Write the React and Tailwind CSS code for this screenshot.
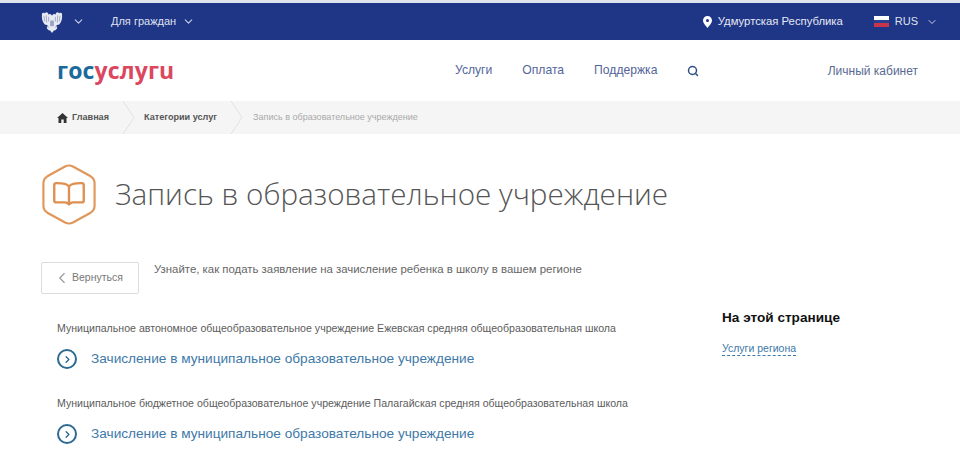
import React from 'react';
import { ChevronDown, ChevronLeft, ChevronRight, Search } from 'lucide-react';

const Emblem = () => (
    <svg width="22" height="22" viewBox="0 0 22 23">
        <path d="M11 5 C10 3 8.5 2.5 7.5 4 C7 1.5 5 0.5 3.5 2.5 C2.5 1.5 1 2 0.5 3 C0 8 1 12 3.5 14 L6.5 15 L5.5 18 L7.5 20 L9 20.5 L11 23 L13 20.5 L14.5 20 L16.5 18 L15.5 15 L18.5 14 C21 12 22 8 21.5 3 C21 2 19.5 1.5 18.5 2.5 C17 0.5 15 1.5 14.5 4 C13.5 2.5 12 3 11 5 Z" fill="#e8ebf3" />
        <path d="M2.5 5 L3.5 11 M5 4.5 L5.5 12 M7.5 6 V11 M14.5 6 V11 M17 4.5 L16.5 12 M19.5 5 L18.5 11 M5.5 16 L8 17 M16.5 16 L14 17" stroke="#8f99ba" strokeWidth="0.8" fill="none" />
        <rect x="9" y="10" width="4" height="6" rx="1" fill="#9aa3c1" />
    </svg>
);

const BookIcon = () => (
    <svg width="56" height="61" viewBox="0 0 56 62" fill="none">
        <path d="M24 2.5 Q28 0.5 32 2.5 L50 12.5 Q54 15 54 19.5 L54 42.5 Q54 47 50 49.5 L32 59.5 Q28 61.5 24 59.5 L6 49.5 Q2 47 2 42.5 L2 19.5 Q2 15 6 12.5 Z" stroke="#e2975a" strokeWidth="2.2" />
        <path d="M28 23 C26 20 23 19.5 15 19.5 Q13 19.5 13 21.5 V37 Q13 39 15 39 H24 C26 39 27 40 28 41 C29 40 30 39 32 39 H41 Q43 39 43 37 V21.5 Q43 19.5 41 19.5 C33 19.5 30 20 28 23 Z M28 23 V41" stroke="#df8f50" strokeWidth="2.4" strokeLinejoin="round" />
    </svg>
);

const Crumb = () => (
    <svg width="14" height="33" viewBox="0 0 14 33" fill="none" className="shrink-0">
        <path d="M1 0 L12 16.5 L1 33" stroke="#e2e2e2" strokeWidth="1" />
    </svg>
);

const ServiceItem = ({ org }) => (
    <div>
        <p className="text-[10.6px] leading-[14px] text-[#5c5c5c]">{org}</p>
        <a href="#" className="flex items-center gap-[14px] mt-[14px]">
            <span className="flex items-center justify-center w-[20px] h-[20px] rounded-full border-2 border-[#2c6a92]">
                <ChevronRight size={11} strokeWidth={3} className="text-[#2c6a92]" />
            </span>
            <span className="text-[13.65px] leading-[20px] font-medium text-[#4079a8]">Зачисление в муниципальное образовательное учреждение</span>
        </a>
    </div>
);

const App = () => {
    return (
        <div className="w-[960px] h-[467px] overflow-hidden bg-white font-['Liberation_Sans',sans-serif]">
            <div className="h-[3px] bg-[#dfe3ee]" />

            <div className="h-[37px] bg-[#1f3585] flex items-center pl-[41px] pr-[22px] text-white text-[11px]">
                <Emblem />
                <ChevronDown size={13} className="ml-[9px] text-[#c9d0e6]" />
                <span className="ml-[26px] text-[#dfe3ef]">Для граждан</span>
                <ChevronDown size={13} className="ml-[6px] text-[#c9d0e6]" />
                <svg width="9" height="12" viewBox="0 0 9 12" className="ml-auto">
                    <path fillRule="evenodd" d="M4.5 0 C7 0 9 2 9 4.5 C9 7 6 10 4.5 12 C3 10 0 7 0 4.5 C0 2 2 0 4.5 0 Z M4.5 3 A1.5 1.5 0 1 0 4.5 6 A1.5 1.5 0 1 0 4.5 3 Z" fill="#fff" />
                </svg>
                <span className="ml-[6px] text-[11.3px] text-[#e6e9f3]">Удмуртская Республика</span>
                <span className="ml-[31px] flex flex-col w-[15px] h-[11px]">
                    <span className="flex-1 bg-white" />
                    <span className="flex-1 bg-[#2c3f8f]" />
                    <span className="flex-1 bg-[#c8344c]" />
                </span>
                <span className="ml-[6px] text-[#dfe3ef]">RUS</span>
                <ChevronDown size={12} className="ml-[8px] text-[#c9d0e6]" />
            </div>

            <div className="h-[61px] flex items-center pl-[57px] pr-[42px]">
                <div className="w-[398px] text-[23px] font-bold tracking-[0.15px] font-['Open_Sans',sans-serif] leading-none">
                    <span className="text-[#1c6a9c]">гос</span>
                    <span className="text-[#dc4760]">услугu</span>
                </div>
                <nav className="flex items-center gap-[30px] text-[12.15px] text-[#53659a]">
                    <a href="#">Услуги</a>
                    <a href="#">Оплата</a>
                    <a href="#">Поддержка</a>
                </nav>
                <Search size={12} strokeWidth={3} className="ml-[30px] text-[#2f4d85]" />
                <a href="#" className="ml-auto text-[12px] text-[#5a6a92]">Личный кабинет</a>
            </div>

            <div className="h-[33px] bg-[#f5f5f5] flex items-center pl-[57px] text-[9.1px]">
                <svg width="11" height="10" viewBox="0 0 11 10">
                    <path d="M5.5 0 L11 5 L9.5 5 L9.5 10 L6.7 10 L6.7 6.5 L4.3 6.5 L4.3 10 L1.5 10 L1.5 5 L0 5 Z" fill="#333" />
                </svg>
                <span className="ml-[4px] font-bold text-[#555]">Главная</span>
                <span className="ml-[13px]"><Crumb /></span>
                <span className="ml-[8px] font-bold text-[#555]">Категории услуг</span>
                <span className="ml-[13px]"><Crumb /></span>
                <span className="ml-[9px] text-[9.03px] text-[#aaa]">Запись в образовательное учреждение</span>
            </div>

            <div className="flex items-center pl-[41px] mt-[30px]">
                <BookIcon />
                <h1 className="ml-[18px] -translate-y-px text-[29.65px] leading-[40px] font-light text-[#555] font-['Open_Sans',sans-serif]">Запись в образовательное учреждение</h1>
            </div>

            <div className="flex items-start pl-[41px] mt-[37px]">
                <button className="flex items-center w-[98px] h-[32px] border border-[#dcdcdc] rounded-[2px] pl-[11px] text-[10.5px] text-[#777]">
                    <ChevronLeft size={18} strokeWidth={1.5} className="text-[#999]" />
                    <span className="ml-[1px]">Вернуться</span>
                </button>
                <p className="ml-[15px] text-[11.4px] leading-[14px] text-[#666]">Узнайте, как подать заявление на зачисление ребенка в школу в вашем регионе</p>
            </div>

            <div className="flex pl-[57px] mt-[15px]">
                <div className="w-[665px] flex flex-col gap-[27px] pt-[12px]">
                    <ServiceItem org="Муниципальное автономное общеобразовательное учреждение Ежевская средняя общеобразовательная школа" />
                    <ServiceItem org="Муниципальное бюджетное общеобразовательное учреждение Палагайская средняя общеобразовательная школа" />
                </div>
                <div>
                    <h2 className="text-[13.6px] leading-[18px] font-bold text-[#111]">На этой странице</h2>
                    <a href="#" className="block mt-[14px] text-[10.5px] leading-[14px] text-[#4079a8] border-b border-dashed border-[#4079a8] w-fit">Услуги региона</a>
                </div>
            </div>
        </div>
    );
};

export default App;
